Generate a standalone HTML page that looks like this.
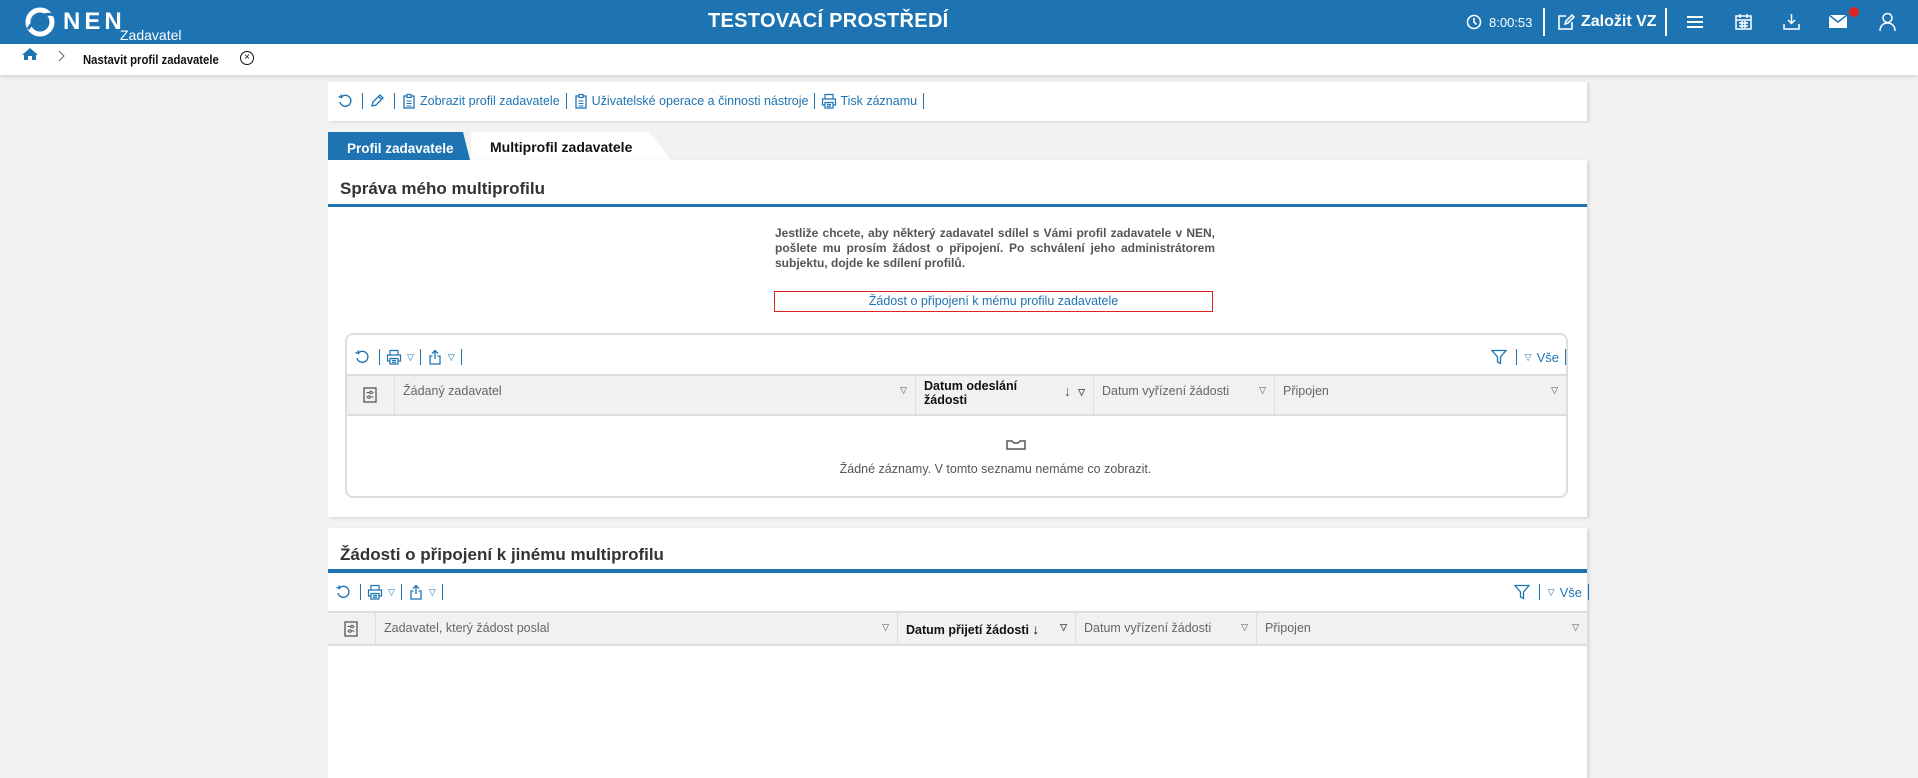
<!DOCTYPE html>
<html><head><meta charset="utf-8"><style>
*{box-sizing:border-box;margin:0;padding:0}
body{width:1918px;height:771px;overflow:hidden;background:#f2f2f2;font-family:"Liberation Sans",sans-serif;position:relative;color:#333}
.abs{position:absolute}
.hdr{left:0;top:0;width:1918px;height:44px;background:#1e74b3;color:#fff}
.bc{left:0;top:44px;width:1918px;height:31px;background:#fff;box-shadow:0 2px 4px rgba(0,0,0,.12)}
.card{background:#fff;box-shadow:2px 1px 3px rgba(0,0,0,.12)}
.tb{font-size:12.5px;color:#1e74b3;white-space:nowrap;display:flex;align-items:center}
.tb svg{margin-right:3px}
.sep{display:inline-block;width:1px;height:16px;background:#1e74b3;margin:0 6px}
.th{background:#f1f1f1;border-top:2px solid #ddd;border-bottom:2px solid #ddd;font-size:12.5px;color:#666}
.th div{position:absolute;top:0;bottom:0;border-left:1px solid #ddd;padding:8px 8px}
.tri{position:absolute;right:8px;top:9px;font-size:9px;color:#555}
.title{font-size:17px;font-weight:bold;color:#333}
.dd{font-size:9px;margin-left:2px}
</style></head><body>
<svg width="0" height="0" style="position:absolute">
<defs>
<symbol id="ref" viewBox="0 0 16 16"><path d="M4 4.5A5.5 5.5 0 1 1 3 9" fill="none" stroke="#1e74b3" stroke-width="1.4"/><path d="M1.5 3.5L4.5 4.5 4 1.5" fill="none" stroke="#1e74b3" stroke-width="1.4"/></symbol>
<symbol id="pen" viewBox="0 0 16 16"><path d="M3 13l1-4 7-7 3 3-7 7z M9.5 3.5l3 3" fill="none" stroke="#1e74b3" stroke-width="1.3"/></symbol>
<symbol id="clip" viewBox="0 0 16 16"><rect x="3" y="3" width="10" height="12" fill="none" stroke="#1e74b3" stroke-width="1.3"/><rect x="6" y="1.5" width="4" height="3" fill="#fff" stroke="#1e74b3" stroke-width="1.2"/><path d="M5.5 8h5M5.5 10.5h5M5.5 13h5" stroke="#1e74b3" stroke-width="1"/></symbol>
<symbol id="prn" viewBox="0 0 16 16"><path d="M4 6V1.5h8V6M4 12H1.5V6h13v6H12M4 9.5h8V15H4z M6 11.5h4M6 13.3h4" fill="none" stroke="#1e74b3" stroke-width="1.2"/></symbol>
<symbol id="exp" viewBox="0 0 16 16"><path d="M8 10V1.5M5 4.5l3-3 3 3M5.5 7H3v8h10V7h-2.5" fill="none" stroke="#1e74b3" stroke-width="1.3"/></symbol>
<symbol id="fil" viewBox="0 0 16 16"><path d="M1 1.5h14L9.5 8v6.5L6.5 13V8z" fill="none" stroke="#1e74b3" stroke-width="1.3"/></symbol>
<symbol id="cfg" viewBox="0 0 14 16"><rect x="1" y="1" width="12" height="14" fill="none" stroke="#555" stroke-width="1.3"/><path d="M3.5 5.5h7M3.5 10h7" stroke="#555"/><circle cx="8" cy="5.5" r="1.3" fill="#fff" stroke="#555"/><circle cx="6" cy="10" r="1.3" fill="#fff" stroke="#555"/></symbol>
</defs></svg>
<div class="abs hdr">
 <svg class="abs" style="left:24px;top:7px" width="32" height="30" viewBox="0 0 32 30"><circle cx="16" cy="15" r="12" fill="none" stroke="#fff" stroke-width="5"/><path d="M4 22 Q16 4 30 8" stroke="#1e74b3" stroke-width="3" fill="none"/></svg>
 <div class="abs" style="left:63px;top:8px;font-size:24px;font-weight:bold;letter-spacing:4px">NEN</div>
 <div class="abs" style="left:120px;top:27px;font-size:14px">Zadavatel</div>
 <div class="abs" style="left:708px;top:10px;font-size:20px;font-weight:bold;letter-spacing:.3px">TESTOVACÍ PROSTŘEDÍ</div>
 <svg class="abs" style="left:1466px;top:14px" width="16" height="16" viewBox="0 0 16 16" fill="none" stroke="#fff" stroke-width="1.6"><circle cx="8" cy="8" r="6.5"/><path d="M8 4v4l2.5 2.5"/></svg>
 <div class="abs" style="left:1489px;top:15px;font-size:13px">8:00:53</div>
 <div class="abs" style="left:1543px;top:8px;width:2px;height:28px;background:#fff"></div>
 <svg class="abs" style="left:1557px;top:13px" width="18" height="18" viewBox="0 0 18 18" fill="none" stroke="#fff" stroke-width="1.6"><path d="M9 3H2v13h13V9"/><path d="M8 11l1-3 6-6 2 2-6 6z"/></svg>
 <div class="abs" style="left:1581px;top:13px;font-size:16px;font-weight:bold">Založit VZ</div>
 <div class="abs" style="left:1665px;top:8px;width:2px;height:28px;background:#fff"></div>
 <svg class="abs" style="left:1687px;top:15px" width="16" height="14" stroke="#fff" stroke-width="2"><path d="M0 2h16M0 7h16M0 12h16"/></svg>
 <svg class="abs" style="left:1735px;top:13px" width="17" height="17" viewBox="0 0 17 17" fill="none" stroke="#fff" stroke-width="1.5"><rect x="1" y="3" width="15" height="13"/><path d="M1 7h15M5 1v4M12 1v4M4 10h9M4 13h9M7 8v7M10 8v7"/></svg>
 <svg class="abs" style="left:1783px;top:13px" width="17" height="17" viewBox="0 0 17 17" fill="none" stroke="#fff" stroke-width="1.5"><path d="M8.5 1v9M5 7l3.5 3.5L12 7M1 11v5h15v-5"/></svg>
 <svg class="abs" style="left:1829px;top:15px" width="18" height="13" viewBox="0 0 18 13"><rect width="18" height="13" fill="#fff"/><path d="M0 0l9 7 9-7" stroke="#1e74b3" stroke-width="1.5" fill="none"/></svg>
 <div class="abs" style="left:1849px;top:7px;width:10px;height:10px;border-radius:50%;background:#d22"></div>
 <svg class="abs" style="left:1879px;top:12px" width="17" height="19" viewBox="0 0 17 19" fill="none" stroke="#fff" stroke-width="1.5"><circle cx="8.5" cy="6" r="4.5"/><path d="M1 19c0-5 3-8 7.5-8s7.5 3 7.5 8"/></svg>
</div>
<div class="abs bc">
 <svg class="abs" style="left:22px;top:4px" width="16" height="12" viewBox="0 0 16 12"><path d="M8 0L0 7h2v5h4V8h4v4h4V7h2z" fill="#1e74b3"/></svg>
 <svg class="abs" style="left:58px;top:6px" width="8" height="12" fill="none" stroke="#666"><path d="M1 1l5 5-5 5"/></svg>
 <div class="abs" style="left:83px;top:8px;font-size:13px;font-weight:bold;color:#111;transform:scaleX(.87);transform-origin:0 0;white-space:nowrap">Nastavit profil zadavatele</div>
 <div class="abs" style="left:240px;top:7px;width:14px;height:14px;border:1.5px solid #111;border-radius:50%;font-size:10px;line-height:11px;text-align:center;color:#111">×</div>
</div>
<div class="abs card" style="left:328px;top:82px;width:1259px;height:39px">
 <div class="abs tb" style="left:9px;top:11px"><svg width="16" height="16"><use href="#ref"/></svg><span class="sep"></span><svg width="16" height="16"><use href="#pen"/></svg><span class="sep"></span><svg width="16" height="16"><use href="#clip"/></svg>Zobrazit profil zadavatele<span class="sep"></span><svg width="16" height="16"><use href="#clip"/></svg>Uživatelské operace a činnosti nástroje<span class="sep"></span><svg width="16" height="16"><use href="#prn"/></svg>Tisk záznamu<span class="sep"></span></div>
</div>
<div class="abs" style="left:328px;top:132px;width:142px;height:28px;background:#1e74b3;clip-path:polygon(0 0,135px 0,142px 28px,0 28px);color:#fff;font-weight:bold;font-size:13.5px;padding:9px 0 0 19px">Profil zadavatele</div>
<div class="abs" style="left:471px;top:132px;width:200px;height:28px;background:#fff;clip-path:polygon(0 0,178px 0,200px 28px,0 28px);color:#111;font-weight:bold;font-size:14px;padding:7px 0 0 19px">Multiprofil zadavatele</div>
<div class="abs card" style="left:328px;top:160px;width:1259px;height:357px">
 <div class="abs title" style="left:12px;top:19px">Správa mého multiprofilu</div>
 <div class="abs" style="left:0;top:44px;width:1259px;height:3px;background:#1e74b3"></div>
 <div class="abs" style="left:447px;top:66px;width:440px;font-size:12px;font-weight:bold;color:#555;line-height:15px;text-align:justify">Jestliže chcete, aby některý zadavatel sdílel s Vámi profil zadavatele v NEN, pošlete mu prosím žádost o připojení. Po schválení jeho administrátorem subjektu, dojde ke sdílení profilů.</div>
 <div class="abs" style="left:446px;top:131px;width:439px;height:21px;border:1px solid #e02020;color:#1e74b3;font-size:12.5px;text-align:center;line-height:19px">Žádost o připojení k mému profilu zadavatele</div>
 <div class="abs" style="left:17px;top:173px;width:1223px;height:165px;border:2px solid #ddd;border-radius:8px">
  <div class="abs tb" style="left:7px;top:14px"><svg width="16" height="16"><use href="#ref"/></svg><span class="sep"></span><svg width="16" height="16"><use href="#prn"/></svg><span class="dd">▽</span><span class="sep"></span><svg width="16" height="16"><use href="#exp"/></svg><span class="dd">▽</span><span class="sep"></span></div>
  <div class="abs tb" style="right:0;top:14px;font-size:13px"><svg width="16" height="16"><use href="#fil"/></svg><span class="sep"></span><span class="dd" style="margin-right:5px">▽</span>Vše<span class="sep" style="margin-right:0"></span></div>
  <div class="abs th" style="left:0;top:39px;width:1219px;height:42px">
   <div style="left:0;width:47px;border:0"><svg width="14" height="16" style="margin:3px 0 0 8px"><use href="#cfg"/></svg></div>
   <div style="left:47px;width:521px">Žádaný zadavatel<span class="tri">▽</span></div>
   <div style="left:568px;width:178px;color:#111;font-weight:bold;line-height:14px;padding-top:3px">Datum odeslání<br>žádosti<span class="tri" style="right:22px;font-size:14px;top:8px;font-weight:normal">↓</span><span class="tri">▽</span></div>
   <div style="left:746px;width:181px">Datum vyřízení žádosti<span class="tri">▽</span></div>
   <div style="left:927px;width:292px">Připojen<span class="tri">▽</span></div>
  </div>
  <svg class="abs" style="left:659px;top:105px" width="20" height="10" fill="none" stroke="#555" stroke-width="1.5"><path d="M1 1h5l2 2h4l2-2h5v8H1z"/></svg>
  <div class="abs" style="left:0;width:1219px;top:127px;text-align:center;font-size:12.5px;color:#555;padding-left:78px">Žádné záznamy. V tomto seznamu nemáme co zobrazit.</div>
 </div>
</div>
<div class="abs card" style="left:328px;top:528px;width:1259px;height:250px">
 <div class="abs title" style="left:12px;top:17px">Žádosti o připojení k jinému multiprofilu</div>
 <div class="abs" style="left:0;top:41px;width:1259px;height:4px;background:#1e74b3"></div>
 <div class="abs tb" style="left:7px;top:56px"><svg width="16" height="16"><use href="#ref"/></svg><span class="sep"></span><svg width="16" height="16"><use href="#prn"/></svg><span class="dd">▽</span><span class="sep"></span><svg width="16" height="16"><use href="#exp"/></svg><span class="dd">▽</span><span class="sep"></span></div>
 <div class="abs tb" style="right:-2px;top:56px;font-size:13px"><svg width="16" height="16"><use href="#fil"/></svg><span class="sep"></span><span class="dd" style="margin-right:5px">▽</span>Vše<span class="sep" style="margin-right:0"></span></div>
 <div class="abs th" style="left:0;top:83px;width:1259px;height:35px">
  <div style="left:0;width:47px;border:0"><svg width="14" height="16" style="margin:0 0 0 8px"><use href="#cfg"/></svg></div>
  <div style="left:47px;width:522px">Zadavatel, který žádost poslal<span class="tri">▽</span></div>
  <div style="left:569px;width:178px;color:#111;font-weight:bold">Datum přijetí žádosti <span style="font-weight:normal;font-size:14px">↓</span><span class="tri">▽</span></div>
  <div style="left:747px;width:181px">Datum vyřízení žádosti<span class="tri">▽</span></div>
  <div style="left:928px;width:331px">Připojen<span class="tri">▽</span></div>
 </div>
</div>
</body></html>
